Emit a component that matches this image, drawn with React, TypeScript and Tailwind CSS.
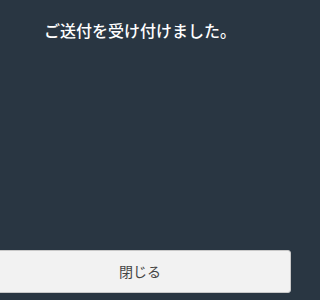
import React from 'react';

const App: React.FC = () => {
  return (
    <div
      className="h-[300px] w-full overflow-hidden bg-[#293642] flex flex-col"
      style={{ fontFamily: '"Noto Sans CJK JP", "Noto Sans", sans-serif' }}
    >
      <div className="-ml-[11px] w-[302px] flex flex-col flex-1">
        <h2 className="pt-[18px] text-center text-[16px] leading-[24px] font-medium text-white">
          ご送付を受け付けました。
        </h2>
        <button
          type="button"
          className="mt-auto mb-[7px] h-[43px] w-full rounded-[3px] border border-[#c8c8c8] bg-[#f2f2f2] text-[14px] text-[#444444]"
        >
          閉じる
        </button>
      </div>
    </div>
  );
};

export default App;
